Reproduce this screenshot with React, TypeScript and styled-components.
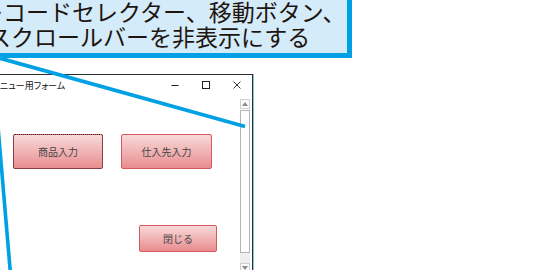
import React from "react";
import styled, { createGlobalStyle } from "styled-components";

const GlobalStyle = createGlobalStyle`
  html, body { margin: 0; padding: 0; background: #ffffff; }
  body { overflow: hidden; font-family: "Noto Sans CJK JP", "Noto Sans", sans-serif; }
`;

const Stage = styled.div`
  position: relative;
  width: 540px;
  height: 270px;
  overflow: hidden;
  background: #ffffff;
`;

const Callout = styled.div`
  box-sizing: border-box;
  margin-top: -10px;
  margin-left: -60px;
  width: 412px;
  height: 68px;
  border: 5px solid #00a0e4;
  background: #d4ebf9;
  padding-top: 4px;
  font-family: "Noto Sans CJK JP", sans-serif;
  font-size: 23px;
  line-height: 25px;
  color: #1e1410;
  white-space: nowrap;
`;

const CalloutLine = styled.div<{ $start: number }>`
  margin-left: ${(p) => p.$start}px;
`;

const Window = styled.div`
  box-sizing: border-box;
  margin-top: 16px;
  margin-left: -100px;
  width: 353px;
  height: 220px;
  border: 1px solid #2e2e2e;
  border-bottom: none;
  box-shadow: 1px 0 0 #7cc8ec;
  background: #ffffff;
  display: flex;
  flex-direction: column;
`;

const TitleBar = styled.div`
  height: 20px;
  display: flex;
  align-items: center;
`;

const Title = styled.div`
  flex: 1;
  padding-left: 91px;
  font-family: "Noto Sans CJK JP", sans-serif;
  font-feature-settings: "palt";
  font-size: 9px;
  color: #111;
  white-space: nowrap;
  margin-top: 1px;
`;

const Control = styled.div`
  width: 31px;
  height: 20px;
  display: flex;
  align-items: center;
  justify-content: center;
`;

const Body = styled.div`
  flex: 1;
  display: flex;
`;

const Content = styled.div`
  flex: 1;
  padding: 39px 0 0 112px;
  display: flex;
  flex-direction: column;
`;

const ButtonRow = styled.div<{ $top: number; $left: number }>`
  display: flex;
  gap: 18px;
  margin-top: ${(p) => p.$top}px;
  padding-left: ${(p) => p.$left}px;
`;

const FormButton = styled.div<{ $w: number; $h: number; $focus?: boolean }>`
  box-sizing: border-box;
  width: ${(p) => p.$w}px;
  height: ${(p) => p.$h}px;
  border: 1px solid #d9575e;
  border-radius: 2px;
  background: linear-gradient(#f8dada, #e98c8f);
  display: flex;
  align-items: center;
  justify-content: center;
  font-family: "Noto Sans CJK JP", sans-serif;
  font-size: 10px;
  color: #454545;
  outline: ${(p) => (p.$focus ? "1px dotted #3a2a2a" : "none")};
  outline-offset: -1px;
`;

const ScrollBar = styled.div`
  width: 10px;
  margin: 4px 2px 0 0;
  display: flex;
  flex-direction: column;
`;

const ArrowBox = styled.div`
  box-sizing: border-box;
  height: 10px;
  border: 1px solid #cfcfcf;
  background: #fafafa;
  display: flex;
  align-items: center;
  justify-content: center;
`;

const Thumb = styled.div`
  box-sizing: border-box;
  height: 143px;
  margin-top: 1px;
  border: 1px solid #b4b4b4;
  background: #ffffff;
`;

const Track = styled.div`
  height: 10px;
  background: #efefef;
`;

const Overlay = styled.svg`
  position: absolute;
  left: 0;
  top: 0;
  pointer-events: none;
`;

const Arrow = ({ down }: { down?: boolean }) => (
  <svg width="6" height="4" viewBox="0 0 6 4">
    <polygon points={down ? "0,0 6,0 3,4" : "0,4 6,4 3,0"} fill="#8a8a8a" />
  </svg>
);

export default function App() {
  return (
    <>
      <GlobalStyle />
      <Stage>
        <Callout>
          <CalloutLine $start={35}>レコードセレクター、移動ボタン、</CalloutLine>
          <CalloutLine $start={43}>スクロールバーを非表示にする</CalloutLine>
        </Callout>
        <Window>
          <TitleBar>
            <Title>メニュー用フォーム</Title>
            <Control>
              <svg width="8" height="8" viewBox="0 0 8 8">
                <line x1="0.5" y1="4.5" x2="7.5" y2="4.5" stroke="#222" strokeWidth="1" />
              </svg>
            </Control>
            <Control>
              <svg width="8" height="8" viewBox="0 0 8 8">
                <rect x="0.5" y="0.5" width="7" height="7" fill="none" stroke="#222" strokeWidth="1" />
              </svg>
            </Control>
            <Control>
              <svg width="8" height="8" viewBox="0 0 8 8">
                <line x1="0.5" y1="0.5" x2="7.5" y2="7.5" stroke="#222" strokeWidth="0.9" />
                <line x1="7.5" y1="0.5" x2="0.5" y2="7.5" stroke="#222" strokeWidth="0.9" />
              </svg>
            </Control>
          </TitleBar>
          <Body>
            <Content>
              <ButtonRow $top={0} $left={0}>
                <FormButton $w={90} $h={35} $focus>商品入力</FormButton>
                <FormButton $w={91} $h={35}>仕入先入力</FormButton>
              </ButtonRow>
              <ButtonRow $top={56} $left={126}>
                <FormButton $w={78} $h={27}>閉じる</FormButton>
              </ButtonRow>
            </Content>
            <ScrollBar>
              <ArrowBox>
                <Arrow />
              </ArrowBox>
              <Thumb />
              <Track />
              <ArrowBox>
                <Arrow down />
              </ArrowBox>
            </ScrollBar>
          </Body>
        </Window>
        <Overlay width="540" height="270" viewBox="0 0 540 270">
          <line x1="-8" y1="56" x2="245" y2="126.5" stroke="#00a0e4" strokeWidth="3.8" />
          <line x1="-8" y1="56" x2="11" y2="280" stroke="#00a0e4" strokeWidth="3.6" />
        </Overlay>
      </Stage>
    </>
  );
}
